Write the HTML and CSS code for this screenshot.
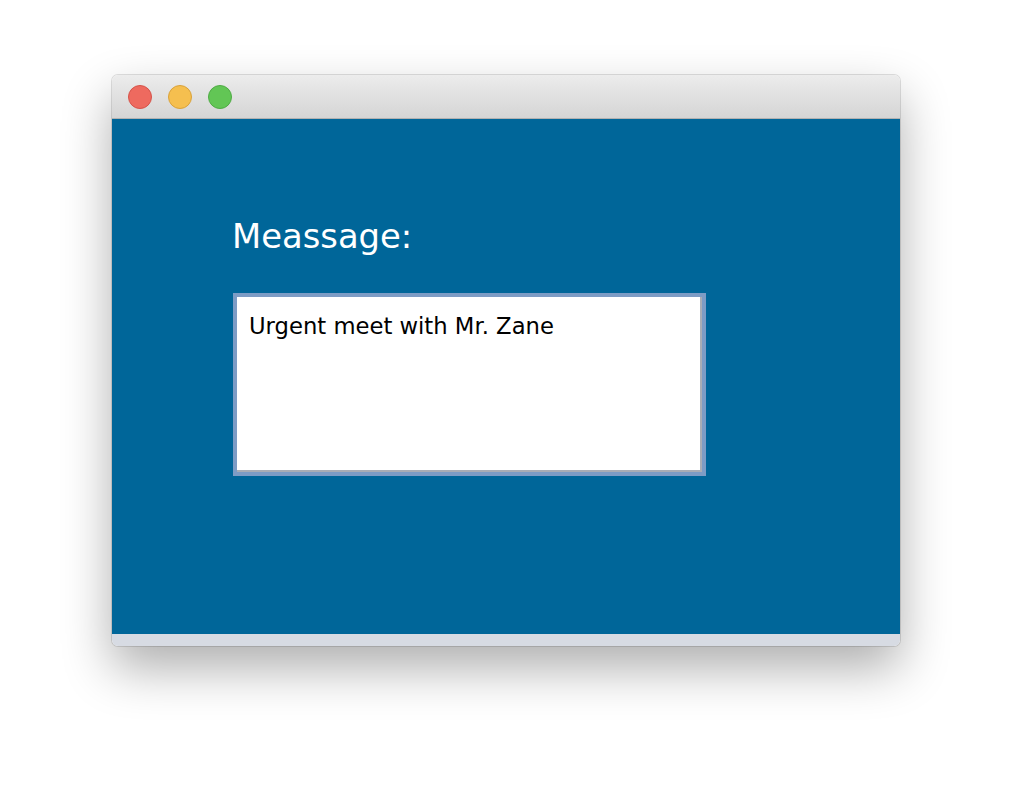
FILE: index.html
```html
<!DOCTYPE html>
<html>
<head>
<meta charset="utf-8">
<link rel="stylesheet" href="styles.css">
</head>
<body>
<div class="window">
  <div class="titlebar">
    <span class="light red"></span>
    <span class="light yellow"></span>
    <span class="light green"></span>
  </div>
  <div class="content">
    <div class="label">Meassage:</div>
    <div class="textbox">Urgent meet with Mr. Zane</div>
  </div>
  <div class="statusbar"></div>
</div>
</body>
</html>
```
FILE: styles.css
```css
html, body {
  margin: 0;
  padding: 0;
  background: #ffffff;
  width: 1012px;
  height: 794px;
  overflow: hidden;
}
body {
  padding-top: 75px;
  padding-left: 112px;
  box-sizing: border-box;
}
.window {
  width: 788px;
  height: 571px;
  display: flex;
  flex-direction: column;
  border-radius: 6px;
  overflow: hidden;
  box-shadow: 0 0 0 1px rgba(0,0,0,0.12), 0 22px 50px rgba(0,0,0,0.32);
}
.titlebar {
  height: 44px;
  flex: none;
  background: linear-gradient(#ececec, #d5d5d5);
  border-bottom: 1px solid #b1b1b1;
  display: flex;
  align-items: center;
  gap: 16px;
  padding-left: 16px;
  box-sizing: border-box;
}
.light {
  width: 24px;
  height: 24px;
  border-radius: 50%;
  box-sizing: border-box;
}
.red { background: #ee6a5f; border: 1px solid #d5534a; }
.yellow { background: #f5bf4f; border: 1px solid #d9a23b; }
.green { background: #62c655; border: 1px solid #4fab45; }
.content {
  flex: 1;
  background: #006699;
  padding: 98px 0 0 121px;
  display: flex;
  flex-direction: column;
  align-items: flex-start;
}
.label {
  font-family: "DejaVu Sans", sans-serif;
  font-size: 33.8px;
  line-height: 40px;
  color: #ffffff;
  margin-left: -1px;
}
.textbox {
  margin-top: 36px;
  width: 473px;
  height: 183px;
  background: #ffffff;
  border: 4px solid #7d9cc5;
  box-shadow: inset -2px -2px 0 #a9adb5;
  padding: 16px 12px;
  box-sizing: border-box;
  font-family: "DejaVu Sans", sans-serif;
  font-size: 22.7px;
  line-height: 26px;
  color: #000000;
}
.statusbar {
  height: 12px;
  flex: none;
  background: #d7dbe3;
}
```
